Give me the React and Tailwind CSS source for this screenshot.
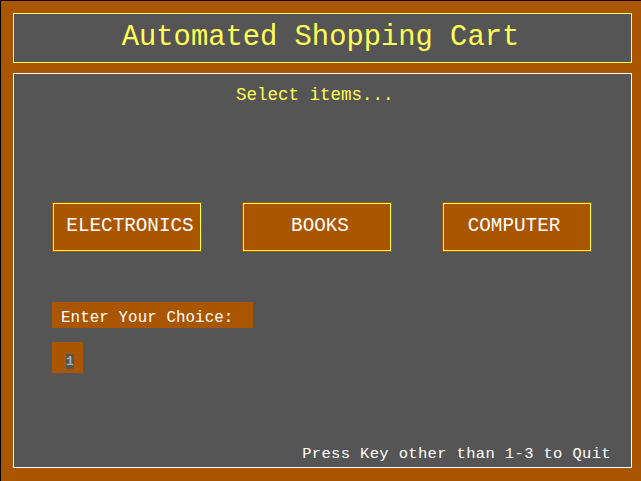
export default function App() {
  const mono = { fontFamily: '"Liberation Mono", "DejaVu Sans Mono", monospace' };
  const items = [
    { name: "ELECTRONICS", cls: "pl-[6px]" },
    { name: "BOOKS", cls: "pl-[6px]" },
    { name: "COMPUTER", cls: "pr-[6px]" },
  ];

  return (
    <div
      className="flex h-[481px] w-[641px] flex-col border-l border-t border-black bg-[#aa5500] pl-[12px] pt-[12px]"
      style={mono}
    >
      <div className="flex h-[50px] w-[619px] items-center justify-center border border-[#ffff55] bg-[#555555] pr-[4px]">
        <span className="text-[28.8px] leading-[32px] text-[#ffff55]">Automated Shopping Cart</span>
      </div>

      <div className="mt-[10px] flex h-[395px] w-[619px] flex-col border border-white bg-[#555555]">
        <p className="ml-[222px] mt-[11px] text-[17.5px] leading-[20px] text-[#ffff55]">Select items...</p>

        <div className="ml-[38px] mt-[97px] flex">
          {items.map((item, i) => (
            <div
              key={item.name}
              className={`flex h-[50px] w-[150px] items-center justify-center border border-[#aa5500] ${
                i === 1 ? "ml-[40px]" : i === 2 ? "ml-[50px]" : ""
              }`}
            >
              <div
                className={`flex h-full w-full items-center justify-center border border-[#ffff55] bg-[#aa5500] pb-[3px] text-[19.3px] leading-[22px] text-white ${item.cls}`}
              >
                {item.name}
              </div>
            </div>
          ))}
        </div>

        <div className="ml-[38px] mt-[50px] h-[26px] w-[201px] bg-[#aa5500] pl-[9px] pt-[6px] text-[15.8px] leading-[20px] tracking-[0.1px] text-white">
          Enter Your Choice:
        </div>

        <div className="ml-[38px] mt-[14px] h-[31px] w-[31px] bg-[#aa5500] pl-[14px] pt-[12px]">
          <span className="block h-[15px] w-[8px] bg-[#555555] text-center text-[13px] font-bold leading-[15px] text-[#aaaaaa]">
            1
          </span>
        </div>

        <p className="mb-[4px] mr-[20px] mt-auto text-right text-[15.5px] leading-[18px] tracking-[0.35px] text-white">
          Press Key other than 1-3 to Quit
        </p>
      </div>
    </div>
  );
}
